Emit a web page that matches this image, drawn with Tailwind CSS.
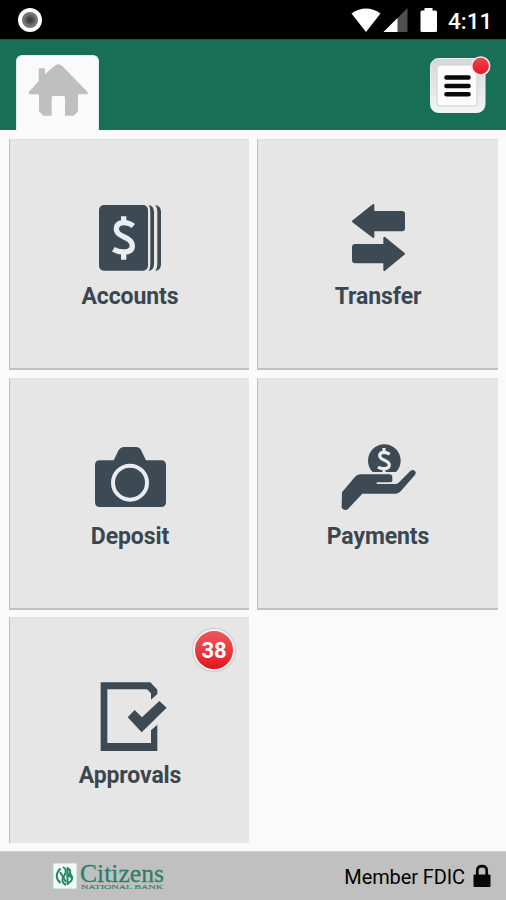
<!DOCTYPE html>
<html lang="en">
<head>
<meta charset="utf-8">
<title>Citizens National Bank</title>
<script src="https://cdn.jsdelivr.net/npm/@tailwindcss/browser@4"></script>
</head>
<body class="w-[506px] h-[900px] overflow-hidden bg-[#fafafa] font-[Roboto,sans-serif] text-[#3b4750]">
<div class="flex flex-col h-[900px]">
  <div class="h-[39px] shrink-0 bg-black flex items-center justify-between">
    <svg class="w-[60px] h-[39px]" viewBox="0 0 60 39"><circle cx="30" cy="20" r="12" fill="#fff"/><circle cx="30" cy="20" r="8" fill="#757575"/><circle cx="30" cy="20" r="5" fill="#5a5a5a"/><circle cx="30" cy="20" r="2.8" fill="#424242"/></svg>
    <div class="flex items-center h-full">
      <svg class="w-[96px] h-[39px]" viewBox="346 0 96 39" fill="#fff"><path d="M351.500 13.500Q366 3.500 380.500 13.500L366 32Z"/><path d="M407.500 8V32H383.500Z" fill="#505050"/><path d="M397.500 18V32H383.500Z"/><path d="M424.500 8h8v2.500h3q1.500 0 1.500 1.500v18.500q0 1.500-1.500 1.500h-13.500q-1.500 0-1.500-1.500V12q0-1.500 1.500-1.500h2.500z"/></svg>
      <span class="w-[64px] pl-[6px] pt-[3px] text-[22.500px] leading-[30px] font-medium text-white">4:11</span>
    </div>
  </div>
  <header class="h-[91px] shrink-0 bg-[#176f56] border-t border-[#115c46] flex justify-between pl-4 pr-[15px]">
    <div class="mt-[15px] w-[83px] h-[75px] rounded-t-[6px] bg-[#fafafa] border-x border-t border-[#dfe9e5]">
      <svg class="w-[81px] h-[75px]" viewBox="51 168 243 225" fill="#bfbfbf"><path d="M86 276L116 244V209Q116 205 120 205H132Q135 205 135 209V223L163 198Q175 188 187 198L262 275Q266 282 258 283H234V334L221 347H195V293Q195 288 190 288H160Q155 288 155 293V347H130L117 334V283H90Q84 282 86 276Z"/></svg>
    </div>
    <svg class="w-[66px] h-[70px] mt-[10px]" viewBox="425 50 66 70">
      <defs><linearGradient id="btn" x2="0" y2="1"><stop stop-color="#d5d8d7"/><stop offset="1" stop-color="#f3f4f4"/></linearGradient><linearGradient id="dot" x2="0" y2="1"><stop stop-color="#f04450"/><stop offset="1" stop-color="#e31828"/></linearGradient></defs>
      <rect x="430.500" y="58.500" width="54.500" height="54" rx="8" fill="url(#btn)" stroke="#edf0ef"/>
      <rect x="437" y="65" width="40" height="41" rx="3" fill="#fbfbfb" stroke="#cfcfcf"/>
      <path d="M446.500 77.500h22M446.500 86h22M446.500 94.300h22" stroke="#080808" stroke-width="4.600" stroke-linecap="round"/>
      <circle cx="480.700" cy="66" r="9" fill="url(#dot)" stroke="#f3e8e8" stroke-width="1.600"/>
    </svg>
  </header>

  <main class="h-[721px] shrink-0 pt-[9px] pl-[9px] grid grid-cols-[240px_241px] grid-rows-[231px_232px_225px] gap-x-2 gap-y-[8px] content-start text-[23px] tracking-[-0.1px] leading-[33px] font-bold text-center">
    <section class="bg-[#e6e6e6] border-l-[1.500px] border-b-2 border-[#c0c0c0] border-t border-t-[#dedede] pt-[50px]">
      <svg class="w-[120px] h-[90px] ml-[60px]" viewBox="0 0 360 270" fill="#3d4a53"><rect x="87" y="45" width="147" height="197" rx="15"/><path d="M236 45Q252 48 252 66V222Q252 240 236 243Q241 236 241 222V66Q241 52 236 45Z"/><path d="M256 45Q273 48 273 66V222Q273 240 256 243Q262 236 262 222V66Q262 52 256 45Z"/><path d="M190 108Q178 98 162 98Q139 98 139 117Q139 131 161 140Q187 150 187 167Q187 186 159 186Q143 186 130 178M161 79V98M161 186V209" fill="none" stroke="#e8edf2" stroke-width="16"/></svg>
      <div class="pl-[1px]">Accounts</div>
    </section>
    <section class="bg-[#e6e6e6] border-l-[1.500px] border-b-2 border-[#c0c0c0] border-t border-t-[#dedede] pt-[50px]">
      <svg class="w-[120px] h-[90px] ml-[62px]" viewBox="0 0 360 270" fill="#3d4a53" stroke="#3d4a53" stroke-width="6" stroke-linejoin="round"><path d="M99 94L160 45V66H246Q252 66 252 72V114Q252 121 246 121H160V141Z"/><path d="M252 191L193 240V217H106Q99 217 99 211V172Q99 165 106 165H193V143Z"/></svg>
      <div>Transfer</div>
    </section>
    <section class="bg-[#e6e6e6] border-l-[1.500px] border-b-2 border-[#c0c0c0] border-t border-t-[#dedede] pt-[51px]">
      <svg class="w-[120px] h-[90px] ml-[60px]" viewBox="0 0 360 270" fill="#3d4a53"><path d="M89 91H131L145 62Q151 51 163 51H198Q209 51 214 62L228 91H273Q288 91 288 106V216Q288 231 273 231H89Q75 231 75 216V106Q75 91 89 91Z"/><circle cx="180" cy="158" r="51" fill="none" stroke="#e8edf2" stroke-width="12"/></svg>
      <div class="pl-[1px]">Deposit</div>
    </section>
    <section class="bg-[#e6e6e6] border-l-[1.500px] border-b-2 border-[#c0c0c0] border-t border-t-[#dedede] pt-[51px]">
      <svg class="w-[120px] h-[90px] ml-[62px]" viewBox="0 0 360 270" fill="#3d4a53"><path d="M158 126A49 49 0 1 1 228 126Z"/><path d="M209 73Q201 67 192 67Q179 67 179 77Q179 84 192 90Q208 97 208 105Q208 116 190 116Q181 116 174 111M192 54V66M192 117V128" fill="none" stroke="#e8edf2" stroke-width="9.500"/><path d="M66 187L104 142Q111 133 121 133H208Q217 133 217 143V152Q217 157 209 157H170V162H227Q233 162 238 156L270 124Q281 115 287 126Q288 131 284 136L242 184Q236 191 228 191H127L84 237Q77 243 67 236Q64 233 65 228Z"/></svg>
      <div>Payments</div>
    </section>
    <section class="relative -mt-px bg-[#e6e6e6] border-l-[1.500px] border-[#c0c0c0] border-t border-t-[#dedede] pt-[51px]">
      <svg class="w-[120px] h-[90px] ml-[60px]" viewBox="0 162 360 270" fill="#3d4a53"><path d="M92 202H241L262 224V237L243 254V235L231 223H112V384H243V346L262 329V408H92Z"/><path d="M173 307L194 285L216 307L268 258L290 278L215 352Z"/></svg>
      <div class="pl-[1px]">Approvals</div>
      <div class="absolute left-[183px] top-[11px] w-[42px] h-[42px] rounded-full border-[2.500px] border-[#f3f3f3] bg-linear-to-b from-[#ef5560] to-[#e20d18] shadow-[0_0_2px_#888] text-white text-[22px] leading-[39px]">38</div>
    </section>
  </main>

  <footer class="h-[49px] shrink-0 bg-[#c0c0c0] border-t border-[#d0d0d0] flex items-center justify-between pl-[52px] pr-[15px]">
    <svg class="w-[114px] h-[34px]" viewBox="52 859 114 34">
      <rect x="53" y="863" width="24" height="26" fill="#f6f9f7" stroke="#a8d5c5"/>
      <g fill="none" stroke="#278768" stroke-width="2"><path d="M60.500 868.500Q53 876 60.500 883"/><path d="M63 867Q68 870 64 876T66 885"/><path d="M67.500 867V885"/><path d="M67 868.500Q73 870 68 875.500Q76 878 68 883.500"/><path d="M60 872L66 882M70 873L72.500 878"/></g>
      <text x="80" y="881.500" textLength="84" lengthAdjust="spacingAndGlyphs" font-family="Liberation Serif, serif" font-size="24.500" fill="#2d8065" stroke="#2d8065" stroke-width=".3">Citizens</text>
      <text x="81" y="888.500" textLength="82" lengthAdjust="spacingAndGlyphs" font-family="Liberation Serif, serif" font-size="7" fill="#2d8065" stroke="#2d8065" stroke-width=".15">NATIONAL BANK</text>
    </svg>
    <div class="flex items-center gap-2 text-black text-[20px] leading-[30px]">
      <span class="pt-px tracking-[-0.1px]">Member FDIC</span>
      <svg class="w-[18px] h-[24px]" viewBox="0 0 18 24"><path d="M4.300 12V6.500Q4.300 2.200 9 2.200T13.700 6.500V12" fill="none" stroke="#080808" stroke-width="2.700"/><rect x=".5" y="10.500" width="17" height="12.500" rx="1" fill="#080808"/></svg>
    </div>
  </footer>
</div>
</body>
</html>
